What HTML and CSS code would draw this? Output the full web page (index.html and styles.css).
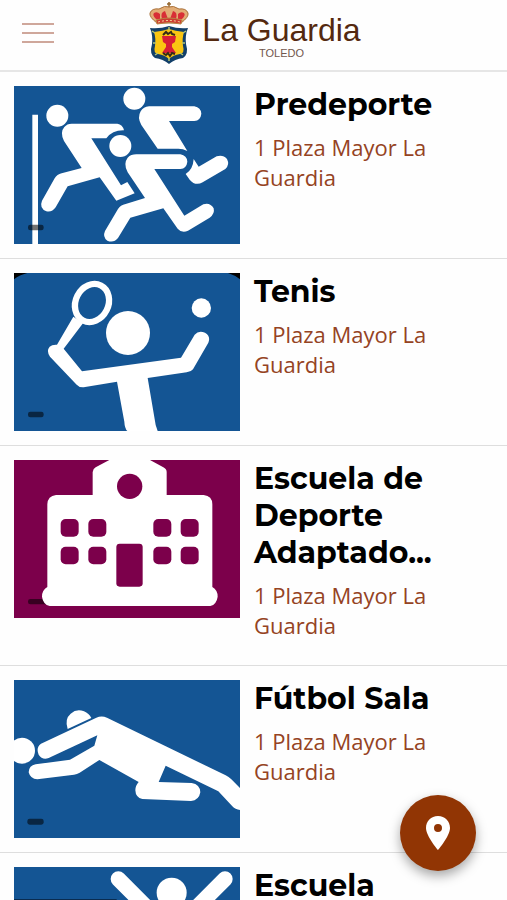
FILE: index.html
```html
<!DOCTYPE html>
<html lang="es">
<head>
    <meta charset="UTF-8">
    <meta name="viewport" content="width=device-width, initial-scale=1.0">
    <title>La Guardia</title>
    <link rel="stylesheet" href="styles.css">
</head>
<body>
    <header class="header">
        <button class="menu-button" type="button" aria-label="Menú">
            <span class="menu-line"></span>
            <span class="menu-line"></span>
            <span class="menu-line"></span>
        </button>
        <a class="logo" href="#">
            <svg class="crest" viewBox="0 0 42 62" aria-hidden="true">
                <!-- crown -->
                <path d="M21 0v6M19 2h4" stroke="#94672f" stroke-width="1.5"/>
                <path d="M9 21Q1 15 2 11Q4 6 11 7Q17 3 21 5Q25 3 31 7Q38 6 40 11Q41 15 33 21Z" fill="#e2ad75" stroke="#a9713b"/>
                <path d="M8 17Q4 13 6 11Q9 9 12 12L12 17ZM14 17Q12 10 17 9L20 17ZM28 17Q30 10 25 9L22 17ZM34 17Q38 13 36 11Q33 9 30 12L30 17Z" fill="#d82f36"/>
                <path d="M8 18Q21 14 34 18L33 22Q21 19 9 22Z" fill="#ce3b31" stroke="#b98544"/>
                <path d="M10 20Q21 17 32 20" fill="none" stroke="#f4d9a0" stroke-width="1" stroke-dasharray="2 2"/>
                <!-- shield -->
                <path d="M2 26Q12 27 21 24Q30 27 40 26Q37 33 38 42Q41 52 35 56Q27 57 21 62Q15 57 7 56Q1 52 4 42Q5 33 2 26Z" fill="#123f69"/>
                <path d="M6 30Q15 29 21 27Q27 29 36 30Q34 36 35 44Q37 51 32 52Q25 53 21 57Q17 53 10 52Q5 51 7 44Q8 36 6 30Z" fill="#fac512"/>
                <path d="M4 29l3 2M38 29l-3 2M5 41h3M37 41h-3M7 53l3-2M35 53l-3-2M21 25v3M21 59v-3" stroke="#b5c46f" stroke-width="1.5"/>
                <path d="M14 34h14l-1 6-3 2v3l4 6H14l4-6v-3l-3-2Z" fill="#d71d36"/>
                <path d="M15 33l3-3 2 2 3-2 1 2 3 1M15 51l3 2 2-2 2 3 2-3 3 1" fill="none" stroke="#332a17" stroke-width="2"/>
            </svg>
            <span class="logo-text">
                <span class="logo-name">La Guardia</span>
                <span class="logo-region">TOLEDO</span>
            </span>
        </a>
    </header>

    <main class="list">
        <article class="item">
            <svg class="thumb" viewBox="42 34 678 474" aria-hidden="true">
                <path d="M97 120h17v388H97z" fill="#fff"/>
                <g fill="#fff">
                    <circle cx="172" cy="123" r="33"/>
                    <circle cx="403" cy="72" r="33"/>
                    <circle cx="361" cy="214" r="33"/>
                    <path d="M215 147H352Q368 149 372 167Q337 166 319 191H274L363 332L382 322L404 356L349 378L299 308L203 335L167 398Q156 414 139 410Q117 400 126 378L164 311Q171 299 185 296L245 280L192 199Q179 173 193 157Q201 147 215 147Z"/>
                    <path d="M447 95H583Q603 99 604 117Q602 137 583 139H507L562 229Q549 222 535 222H473L424 151Q411 129 422 110Q430 96 447 95Z"/>
                    <path d="M581 253L596 276L650 245Q669 239 681 253Q690 270 676 283L608 323Q586 335 569 315L557 298Q579 285 581 253Z"/>
                    <path d="M409 239H541Q561 243 562 261Q560 281 541 283H463L553 423L610 389Q630 382 641 401Q645 418 629 429L564 468Q546 477 533 462L490 401L391 429L354 490Q341 506 322 498Q307 487 315 469L354 403Q361 391 377 388L435 370L383 293Q369 267 383 249Q393 239 409 239Z"/>
                </g>
                <rect class="thumb-mark" x="84" y="450" width="47" height="17" rx="7"/>
            </svg>
            <div class="item-info">
                <h2 class="item-title">Predeporte</h2>
                <p class="item-address">1 Plaza Mayor La Guardia</p>
            </div>
        </article>

        <article class="item">
            <svg class="thumb" viewBox="42 34 678 474" aria-hidden="true">
                <path d="M42 34h40Q58 40 42 53zM720 34h-36Q706 41 720 53z" fill="#000"/>
                <ellipse cx="276" cy="124" rx="49" ry="59" transform="rotate(27 276 124)" fill="none" stroke="#fff" stroke-width="19"/>
                <g fill="#fff">
                    <path d="M220 165L249 185L191 261L246 329L543 288L584 219Q596 205 615 213Q633 224 625 243L579 323Q573 331 560 332L443 349L467 490L473 508H382Q374 500 373 480L351 360L251 377Q238 378 230 369L150 285Q138 268 149 255Q156 248 171 249Z"/>
                    <circle cx="384" cy="214" r="66"/>
                    <circle cx="604" cy="139" r="29"/>
                </g>
                <rect class="thumb-mark" x="84" y="450" width="47" height="17" rx="7"/>
            </svg>
            <div class="item-info">
                <h2 class="item-title">Tenis</h2>
                <p class="item-address">1 Plaza Mayor La Guardia</p>
            </div>
        </article>

        <article class="item">
            <svg class="thumb thumb-school" viewBox="42 30 678 474" aria-hidden="true">
                <rect class="thumb-mark" x="84" y="447" width="60" height="16" rx="7"/>
                <path d="M328 30H450L490 52Q500 57 500 66V135H611Q637 138 637 163V411Q653 420 653 440Q650 463 631 468H149Q129 463 126 440Q126 420 142 411V163Q143 138 168 135H278V66Q278 57 287 52Z" fill="#fff"/>
                <g fill="#7c004b">
                    <circle cx="389" cy="109" r="38"/>
                    <rect x="182" y="207" width="54" height="53" rx="15"/>
                    <rect x="265" y="207" width="54" height="53" rx="15"/>
                    <rect x="460" y="207" width="54" height="53" rx="15"/>
                    <rect x="542" y="207" width="54" height="53" rx="15"/>
                    <rect x="182" y="290" width="54" height="53" rx="15"/>
                    <rect x="265" y="290" width="54" height="53" rx="15"/>
                    <rect x="460" y="290" width="54" height="53" rx="15"/>
                    <rect x="542" y="290" width="54" height="53" rx="15"/>
                    <rect x="349" y="281" width="79" height="129" rx="10"/>
                </g>
            </svg>
            <div class="item-info">
                <h2 class="item-title">Escuela de Deporte Adaptado...</h2>
                <p class="item-address">1 Plaza Mayor La Guardia</p>
            </div>
        </article>

        <article class="item">
            <svg class="thumb" viewBox="42 30 678 474" aria-hidden="true">
                <g fill="#fff">
                    <circle cx="66" cy="242" r="39"/>
                    <path d="M203 177Q193 147 212 131Q230 115 252 124Q267 130 274 144Z"/>
                    <path d="M123 221L289 143Q305 136 321 143L677 316Q686 320 694 328L720 354V420Q706 419 697 409L655 364L497 287L476 336L575 339Q600 343 601 367Q597 391 573 393L427 387Q407 383 406 361Q406 347 416 336L298 270L239 308Q231 313 222 314L112 328Q91 327 86 307Q87 286 107 283L210 269L283 227L292 196L146 264Q127 271 116 254Q107 233 123 221Z"/>
                </g>
                <rect class="thumb-mark" x="82" y="446" width="49" height="18" rx="7"/>
            </svg>
            <div class="item-info">
                <h2 class="item-title">Fútbol Sala</h2>
                <p class="item-address">1 Plaza Mayor La Guardia</p>
            </div>
        </article>

        <article class="item">
            <svg class="thumb" viewBox="42 591 678 474" aria-hidden="true">
                <path d="M42 689H350" stroke="#0a2c50" stroke-width="4"/>
                <circle cx="515" cy="668" r="45" fill="#fff"/>
                <path d="M355 627L470 742H560L675 627M515 742V1065" fill="none" stroke="#fff" stroke-width="46" stroke-linecap="round" stroke-linejoin="round"/>
            </svg>
            <div class="item-info">
                <h2 class="item-title">Escuela</h2>
                <p class="item-address">1 Plaza Mayor La Guardia</p>
            </div>
        </article>
    </main>

    <button class="map-button" type="button" aria-label="Ver en el mapa">
        <svg class="map-icon" viewBox="0 0 24 34" aria-hidden="true">
            <path fill-rule="evenodd" d="M12 0C5 0 0 5 0 12C0 20 12 34 12 34S24 20 24 12C24 5 19 0 12 0ZM12 8A4 4 0 1 1 12 16A4 4 0 1 1 12 8Z" fill="#fff"/>
        </svg>
    </button>
</body>
</html>
```

FILE: styles.css
```css
* {
    margin: 0;
    padding: 0;
    box-sizing: border-box;
}

body {
    font-family: 'Open Sans', 'Noto Sans', sans-serif;
    background: #fefefe;
    color: #000;
}

.header {
    display: grid;
    grid-template-columns: 1fr auto 1fr;
    align-items: center;
    height: 72px;
    padding: 0 14px;
    border-bottom: 2px solid #e6e6e6;
}

.menu-button {
    display: flex;
    flex-direction: column;
    justify-self: start;
    gap: 7px;
    width: 48px;
    padding: 8px;
    margin-bottom: 4px;
    border: none;
    background: none;
    cursor: pointer;
}

.menu-line {
    height: 2px;
    width: 100%;
    background: #cfa79b;
}

.logo {
    display: flex;
    align-items: center;
    gap: 12px;
    padding-left: 2px;
    color: #54290f;
    text-decoration: none;
    font-family: 'Liberation Sans', Arial, sans-serif;
}

.crest {
    width: 42px;
    height: 62px;
    margin-bottom: 4px;
}

.logo-text {
    display: flex;
    flex-direction: column;
    align-items: center;
    padding-top: 2px;
}

.logo-name {
    font-size: 32px;
    line-height: 34px;
}

.logo-region {
    font-size: 11px;
    line-height: 12px;
    color: #72574d;
}

.item {
    display: flex;
    align-items: flex-start;
    gap: 14px;
    padding: 14px;
    border-bottom: 1px solid #dedede;
}

.thumb {
    flex: 0 0 226px;
    width: 226px;
    height: 158px;
    background: #145594;
}

.thumb-school {
    background: #7c004b;
}

.thumb-mark {
    fill: #000;
    fill-opacity: 0.55;
}

.item-info {
    flex: 1;
    min-width: 0;
    padding-bottom: 11px;
}

.item-title {
    font-family: Montserrat, Inter, sans-serif;
    font-size: 30px;
    font-weight: 700;
    line-height: 37px;
    margin-bottom: 9px;
}

.item-address {
    font-size: 22px;
    line-height: 30px;
    color: #954323;
}

.map-button {
    position: fixed;
    right: 31px;
    bottom: 29px;
    display: flex;
    align-items: center;
    justify-content: center;
    width: 76px;
    height: 76px;
    border: none;
    border-radius: 50%;
    background: #913504;
    box-shadow: 0 5px 12px rgba(0, 0, 0, 0.35);
    cursor: pointer;
}

.map-icon {
    width: 24px;
    height: 34px;
}
```
